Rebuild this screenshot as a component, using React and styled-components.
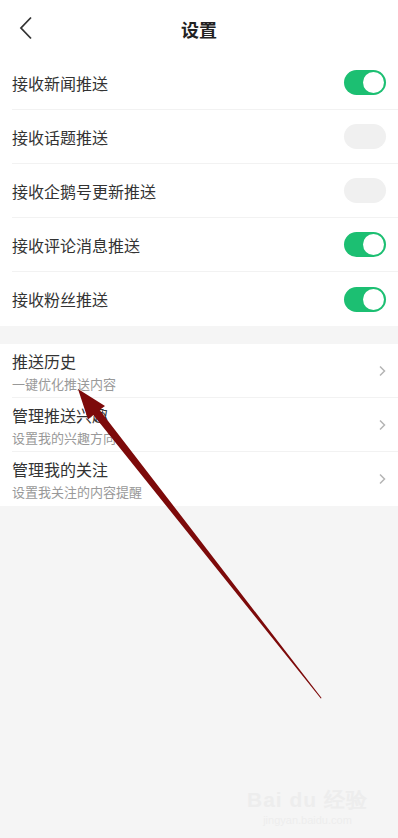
import React, { useState } from 'react';
import styled, { createGlobalStyle } from 'styled-components';

const GlobalStyle = createGlobalStyle`
  html, body {
    margin: 0;
    padding: 0;
    background: #f5f5f5;
    font-family: "Noto Sans CJK SC", "Noto Sans", sans-serif;
  }
`;

const Page = styled.div`
  position: relative;
  width: 398px;
  height: 838px;
  overflow: hidden;
  background: #f5f5f5;
`;

const Header = styled.div`
  height: 56px;
  display: flex;
  align-items: center;
  justify-content: center;
  position: relative;
  background: #ffffff;
`;

const BackButton = styled.button`
  position: absolute;
  left: 12px;
  top: 12px;
  width: 28px;
  height: 32px;
  border: none;
  background: none;
  padding: 0;
  display: flex;
  align-items: center;
  justify-content: center;
`;

const Title = styled.h1`
  margin: 0;
  font-size: 18px;
  font-weight: 700;
  color: #222;
  margin-top: 2px;
`;

const Group = styled.div`
  background: #ffffff;
  padding-left: 12px;
  margin-bottom: ${p => p.$gap || 0}px;
`;

const Row = styled.div`
  height: ${p => p.$h || 54}px;
  display: flex;
  align-items: center;
  justify-content: space-between;
  padding-right: 12px;
  border-bottom: ${p => (p.$last ? 'none' : '1px solid #f2f2f2')};
  box-sizing: border-box;
`;

const Label = styled.span`
  font-size: 16px;
  color: #333;
`;

const TextCol = styled.div`
  display: flex;
  flex-direction: column;
  gap: 1px;
`;

const Sub = styled.span`
  font-size: 13px;
  color: #999;
`;

const Track = styled.div`
  width: 42px;
  height: 25px;
  border-radius: 13px;
  background: ${p => (p.$on ? '#1cbf72' : '#f0f0f0')};
  position: relative;
  cursor: pointer;
`;

const Knob = styled.div`
  position: absolute;
  top: 2px;
  left: ${p => (p.$on ? '19px' : '2px')};
  width: 21px;
  height: 21px;
  border-radius: 50%;
  background: ${p => (p.$on ? '#ffffff' : '#f0f0f0')};
`;

const Watermark = styled.div`
  position: absolute;
  right: 30px;
  bottom: 12px;
  text-align: center;
  color: #ededed;
  font-family: "Liberation Sans", sans-serif;
`;

const WmMain = styled.div`
  font-size: 21px;
  font-weight: 700;
  letter-spacing: 1px;
`;

const WmSub = styled.div`
  font-size: 11px;
`;

const Overlay = styled.svg`
  position: absolute;
  left: 0;
  top: 0;
  pointer-events: none;
`;

const Toggle = ({ on, onClick }) => (
  <Track $on={on} onClick={onClick}>
    <Knob $on={on} />
  </Track>
);

const Chevron = () => (
  <svg width="8" height="12" viewBox="0 0 8 12">
    <path d="M2 1.5 L6.5 6 L2 10.5" fill="none" stroke="#b5b5b5" strokeWidth="1.5" />
  </svg>
);

const pushItems = [
  { label: '接收新闻推送', on: true },
  { label: '接收话题推送', on: false },
  { label: '接收企鹅号更新推送', on: false },
  { label: '接收评论消息推送', on: true },
  { label: '接收粉丝推送', on: true },
];

const linkItems = [
  { label: '推送历史', sub: '一键优化推送内容' },
  { label: '管理推送兴趣', sub: '设置我的兴趣方向' },
  { label: '管理我的关注', sub: '设置我关注的内容提醒' },
];

export default function App() {
  const [toggles, setToggles] = useState(pushItems.map(i => i.on));

  const flip = idx => setToggles(t => t.map((v, i) => (i === idx ? !v : v)));

  return (
    <Page>
      <GlobalStyle />
      <Header>
        <BackButton>
          <svg width="14" height="24" viewBox="0 0 14 24">
            <path d="M12 1.5 L2 12 L12 22.5" fill="none" stroke="#333" strokeWidth="1.8" />
          </svg>
        </BackButton>
        <Title>设置</Title>
      </Header>

      <Group $gap={18}>
        {pushItems.map((item, i) => (
          <Row key={item.label} $last={i === pushItems.length - 1}>
            <Label>{item.label}</Label>
            <Toggle on={toggles[i]} onClick={() => flip(i)} />
          </Row>
        ))}
      </Group>

      <Group>
        {linkItems.map((item, i) => (
          <Row key={item.label} $last={i === linkItems.length - 1}>
            <TextCol>
              <Label>{item.label}</Label>
              <Sub>{item.sub}</Sub>
            </TextCol>
            <Chevron />
          </Row>
        ))}
      </Group>

      <Watermark>
        <WmMain>Bai du 经验</WmMain>
        <WmSub>jingyan.baidu.com</WmSub>
      </Watermark>

      <Overlay width="398" height="838" viewBox="0 0 398 838">
        <polygon
          points="78,389 105,406 99.6,410 321.6,698 320.8,698.6 93.4,415 88,419.5"
          fill="#7d0a0a"
        />
      </Overlay>
    </Page>
  );
}
